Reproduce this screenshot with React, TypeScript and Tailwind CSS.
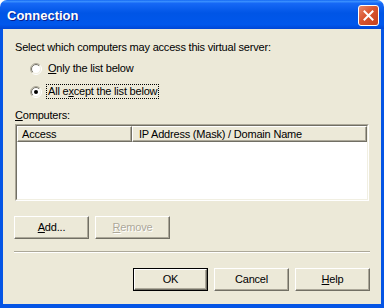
import React from "react";

const Radio = ({ checked }: { checked?: boolean }) => (
  <svg width="12" height="12" viewBox="0 0 12 12" className="shrink-0">
    <defs>
      <linearGradient id={checked ? "ro1" : "ro0"} x1="0" y1="0" x2="1" y2="1">
        <stop offset="0.45" stopColor="#ACA899" />
        <stop offset="0.55" stopColor="#FFFFFF" />
      </linearGradient>
      <linearGradient id={checked ? "ri1" : "ri0"} x1="0" y1="0" x2="1" y2="1">
        <stop offset="0.45" stopColor="#716F64" />
        <stop offset="0.55" stopColor="#F1EFE2" />
      </linearGradient>
    </defs>
    <circle cx="6" cy="6" r="5.5" fill="none" stroke={`url(#${checked ? "ro1" : "ro0"})`} strokeWidth="1" />
    <circle cx="6" cy="6" r="4.5" fill="#fff" stroke={`url(#${checked ? "ri1" : "ri0"})`} strokeWidth="1" />
    {checked && <circle cx="6" cy="6" r="2" fill="#000" />}
  </svg>
);

const Btn = ({
  children,
  primary,
  disabled,
}: {
  children: React.ReactNode;
  primary?: boolean;
  disabled?: boolean;
}) => (
  <div
    className={
      "w-[75px] h-[23px] " +
      (primary ? "border border-black" : "")
    }
  >
    <div
      className={
        "w-full h-full flex items-center justify-center bg-[#ECE9D8] border border-t-white border-l-white border-r-[#716F64] border-b-[#716F64] shadow-[inset_-1px_-1px_0_#ACA899] " +
        (disabled ? "text-[#ACA899] [text-shadow:1px_1px_0_#ffffff]" : "text-black")
      }
    >
      {children}
    </div>
  </div>
);

export default function App() {
  return (
    <div className="w-[384px] h-[308px] bg-white flex flex-col font-['Liberation_Sans',Arial,sans-serif] text-[11px] leading-[13px] text-black">
      {/* Title bar */}
      <div className="h-[29px] shrink-0 rounded-t-[7px] bg-[linear-gradient(180deg,#0A5DF0_0%,#3D93FF_4%,#1668F5_12%,#0055E6_45%,#0057EC_85%,#0046D5_100%)] flex items-start pl-[7px] pr-[5px]">
        <span className="flex-1 mt-[8px] text-white font-bold text-[13px] leading-[15px] [text-shadow:1px_1px_0_#0A1E8C]">
          Connection
        </span>
        <div className="mt-[5px] w-[21px] h-[21px] rounded-[3px] border border-white bg-[linear-gradient(135deg,#E9876A_0%,#D9552F_45%,#C4401E_100%)] flex items-center justify-center">
          <svg width="11" height="11" viewBox="0 0 11 11">
            <path d="M1.5 1.5 L9.5 9.5 M9.5 1.5 L1.5 9.5" stroke="#fff" strokeWidth="2" strokeLinecap="square" />
          </svg>
        </div>
      </div>

      {/* Client area */}
      <div className="flex-1 flex flex-col bg-[#ECE9D8] border-x-[3px] border-b-[4px] border-[#0555E5] px-[11px] pt-[12px] tracking-[-0.2px]">
        <div className="pl-[1px]">Select which computers may access this virtual server:</div>

        <div className="mt-[7px] ml-[16px] flex items-center gap-[4px]">
          <Radio />
          <span className="border border-transparent px-[1px]">
            <u>O</u>nly the list below
          </span>
        </div>
        <div className="mt-[8px] ml-[16px] flex items-center gap-[4px]">
          <Radio checked />
          <span className="border border-dotted border-black px-[1px]">
            All e<u>x</u>cept the list below
          </span>
        </div>

        <div className="mt-[10px] pl-[1px]">
          <u>C</u>omputers:
        </div>

        {/* List view */}
        <div className="mt-[2px] ml-[1px] mr-[1px] h-[77px] border border-t-[#ACA899] border-l-[#ACA899] border-r-white border-b-white">
          <div className="h-full bg-white border border-t-[#716F64] border-l-[#716F64] border-r-[#F1EFE2] border-b-[#F1EFE2]">
            <div className="flex h-[16px]">
              <div className="w-[115px] flex items-center pl-[4px] bg-[#ECE9D8] border border-t-white border-l-white border-r-[#716F64] border-b-[#716F64] shadow-[inset_-1px_-1px_0_#ACA899]">
                Access
              </div>
              <div className="flex-1 flex items-center pl-[6px] bg-[#ECE9D8] border border-t-white border-l-white border-r-[#716F64] border-b-[#716F64] shadow-[inset_-1px_-1px_0_#ACA899]">
                IP Address (Mask) / Domain Name
              </div>
            </div>
          </div>
        </div>

        <div className="mt-[15px] flex gap-[6px]">
          <Btn>
            <u>A</u>dd...
          </Btn>
          <Btn disabled>
            <u>R</u>emove
          </Btn>
        </div>

        <div className="mt-[12px] h-[2px] border-t border-t-[#ACA899] border-b border-b-white" />

        <div className="mt-[15px] flex justify-end gap-[6px]">
          <Btn primary>OK</Btn>
          <Btn>Cancel</Btn>
          <Btn>
            <u>H</u>elp
          </Btn>
        </div>
      </div>
    </div>
  );
}
